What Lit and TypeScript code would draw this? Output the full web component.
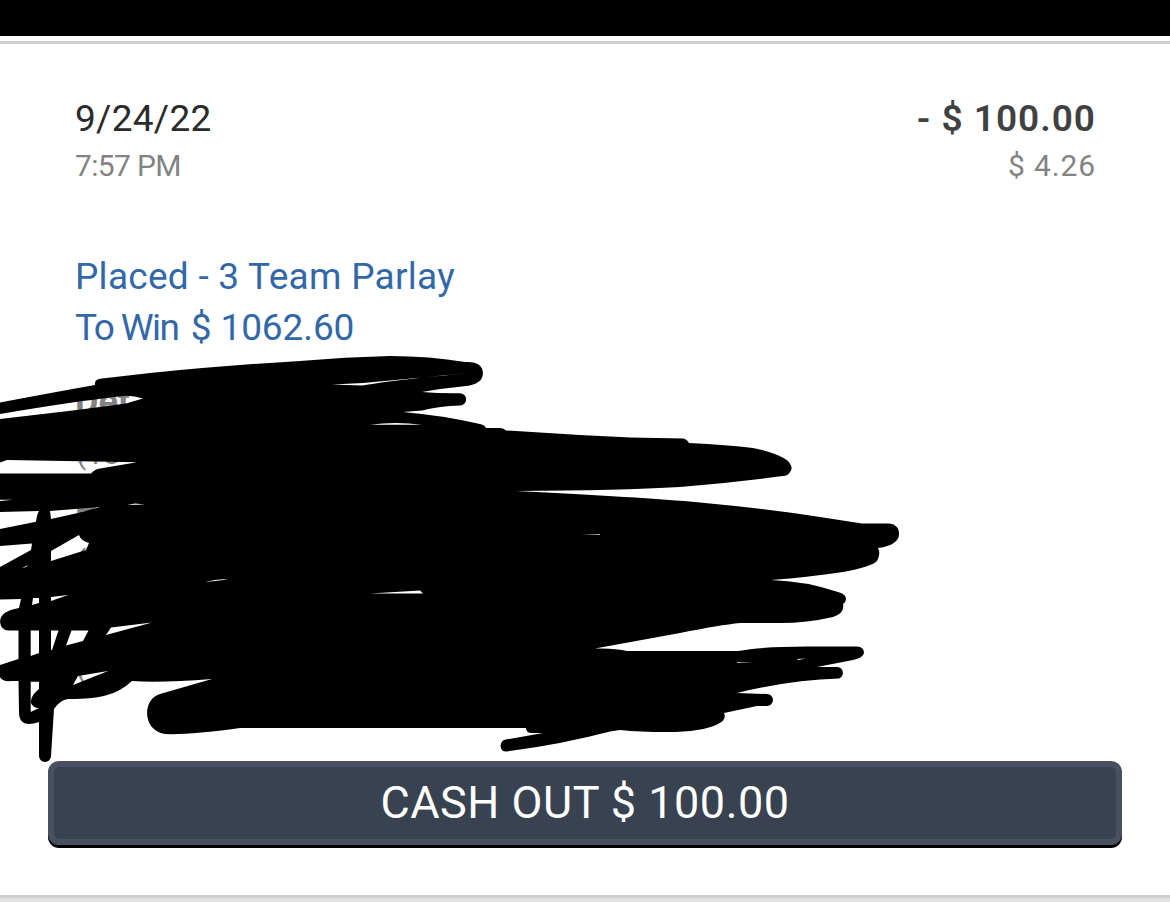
import { LitElement, html, css } from 'lit';
import { customElement } from 'lit/decorators.js';

@customElement('redaction-scribble')
export class RedactionScribble extends LitElement {
  static styles = css`
    :host {
      display: block;
      width: 1170px;
      height: 420px;
    }

    svg {
      display: block;
    }
  `;

  render() {
    return html`
      <svg width="1170" height="420" viewBox="0 350 1170 420" aria-hidden="true">
        <path
          fill="#000"
          fill-rule="evenodd"
          d="M0 402.5Q50 393 95 385Q94 379 102 378.500L150 373Q230 365 300 361Q345 357 390 356Q430 356 465 362Q483 361 483 374Q482 384 466 386Q445 388 422 392Q440 393.500 460 393.200A6 6 0 0 1 460 405.500Q440 406 422 410.500L403 412Q440 415 480 424Q485 425 486 428H500Q504 428 506 430.500L580 435Q630 438 683 438.500Q687 439 689 443Q728 445 753 448Q778 453 788 461Q794 468 790 472Q788 476 783 476Q730 483 680 487Q620 490.500 516 491Q640 497 700 502.500Q760 508 820 517L862 523.500H888Q899 524 899 534Q899 545 878 548Q881 554 877 561Q871 567 843 572Q810 577 771 580Q805 581 838 592Q846 594 846 599Q846 602 843 604Q845 613 833 617Q807 623 780 623H740Q720 625 680 633L595 648.500Q616 648 627 651H738Q763 646.500 807 646.500H857Q864 647 864 653Q863 658 853 660L817 667H838A6 6 0 0 1 839 678.500Q790 680 737 693L767 694A6 6 0 0 1 767 706H757L724 713Q727 720 718 724Q702 732 667 732Q640 732 620 730L610 731.500Q563 744 507 751.500Q501 752 500.500 746Q501 740 506 739.500L543 733H532Q526 733 526 728H240Q190 735 165 734C142 731 142 699 160 694L212 679Q160 683 132 681Q120 692 107 695Q95 699 68 699Q60 700 54 709L51 756A6 6 0 0 1 39 756V722Q19 729 19 712L18.500 681H12Q2 682 0 677V665L18.500 659V630.500H8Q1 630 0 622Q0 611 19 608L21 599L0 599.500V567L31 550L32 543.500L0 546V529L36 521.700Q37 514 39 511L0 512V501L13 499.700H0V473.500H91Q95 469 100 468.500L137 462.300L7 460L0 462.500V419L77 410L126 403.500L143 398.500Q132 395 123 396Q70 402 0 414Z
          M50 511L100 507L78 513L51 519Z
          M51 551L79 535Q81 541 89 543L86 550L51 561Z
          M22 568L28 565L26 567Z
          M33 598H39V603L32 605Z
          M51 597L68 595L51 601Z
          M30.700 630.600H39V653L30.700 656Z
          M51 630.600H58.500L52 650H51Z
          M71.500 630.600H88.500L83 641L66 645.500Z
          M111 627.500L152 622.500L106 635Z
          M78 676L108 671L73 685Z
          M30.700 681.700H39V689Q30 696 31 703Q33 708 39 708L30.700 712Z
          M127 505L135 503.500L145 504.500Z
          M206 582Q217 578.500 228 579.500Z
          M332 384.500L363 383L471 373Q400 379 362 385.500Z
          M370 424.700Q395 421.500 422 424.700Z
          M581 534H600V534.800Z
          M737 662L753 662.700H737Z
          M797 659L806 658.500L798 660Z
          M370 593.500L420 590.500L423 593.500Z"
        />
      </svg>
    `;
  }
}

@customElement('app-root')
export class AppRoot extends LitElement {
  static styles = css`
    :host {
      display: block;
      position: relative;
      box-sizing: border-box;
      width: 1170px;
      height: 902px;
      overflow: hidden;
      background: #fff;
      font-family: Roboto, 'Liberation Sans', sans-serif;
    }

    .bar {
      height: 36px;
      background: #000;
    }

    .card {
      box-sizing: border-box;
      display: flex;
      flex-direction: column;
      height: 857px;
      margin-top: 5px;
      padding: 53px 48px 0;
      border-top: 3px solid #cfcfcf;
      border-bottom: 3px solid #cfcfcf;
    }

    .row {
      display: flex;
      justify-content: space-between;
      padding: 0 27px;
    }

    .right {
      text-align: right;
    }

    .date,
    .amount {
      margin-bottom: 2px;
      color: #2b2b2b;
      font-size: 37px;
      line-height: 44px;
      letter-spacing: 0.3px;
    }

    .amount {
      margin-right: -1px;
      color: #404142;
      font-weight: 600;
      letter-spacing: 1px;
    }

    .time,
    .balance {
      color: #838383;
      font-size: 30px;
      line-height: 46px;
      letter-spacing: -0.65px;
    }

    .balance {
      margin-right: -1px;
      letter-spacing: 0.85px;
    }

    .bet {
      box-sizing: border-box;
      height: 572px;
      padding: 62px 27px 0;
      color: #3268a8;
      font-size: 37px;
      line-height: 51px;
      letter-spacing: 0.27px;
    }

    .to-win {
      margin-right: 3px;
      letter-spacing: -1.6px;
    }

    .win-amount {
      letter-spacing: -0.1px;
    }

    .legs {
      display: flex;
      flex-direction: column;
      gap: 5px;
      padding-top: 24px;
      color: #838383;
      letter-spacing: 0;
    }

    .team {
      height: 51px;
      font-size: 36px;
      font-weight: 700;
    }

    .line {
      height: 51px;
      padding-left: 1px;
      font-size: 30px;
    }

    .scribble {
      position: absolute;
      top: 350px;
      left: 0;
    }

    .cashout {
      box-sizing: border-box;
      flex: none;
      width: 1074px;
      height: 84px;
      margin: 0;
      padding: 0;
      border: 6px solid #485062;
      border-radius: 11px;
      background: #394250;
      box-shadow: 0 3px 0 #000;
      color: #fff;
      font-family: inherit;
      font-size: 45px;
      line-height: 72px;
      letter-spacing: 0.5px;
    }

    .footer {
      height: 4px;
      background: #e1e1e1;
    }
  `;

  legs = [
    { team: 'Det', line: '(18' },
    { team: 'P', line: '(' },
    { team: '', line: '(' },
  ];

  render() {
    return html`
      <div class="bar"></div>
      <div class="card">
        <div class="row">
          <div>
            <div class="date">9/24/22</div>
            <div class="time">7:57 PM</div>
          </div>
          <div class="right">
            <div class="amount">- $ 100.00</div>
            <div class="balance">$ 4.26</div>
          </div>
        </div>
        <div class="bet">
          <div>Placed - 3 Team Parlay</div>
          <div>
            <span class="to-win">To Win</span>
            <span class="win-amount">$ 1062.60</span>
          </div>
          <div class="legs">
            ${this.legs.map(
              (leg) => html`
                <div>
                  <div class="team">${leg.team}</div>
                  <div class="line">${leg.line}</div>
                </div>
              `
            )}
          </div>
        </div>
        <button class="cashout">CASH OUT $ 100.00</button>
      </div>
      <div class="footer"></div>
      <redaction-scribble class="scribble"></redaction-scribble>
    `;
  }
}
